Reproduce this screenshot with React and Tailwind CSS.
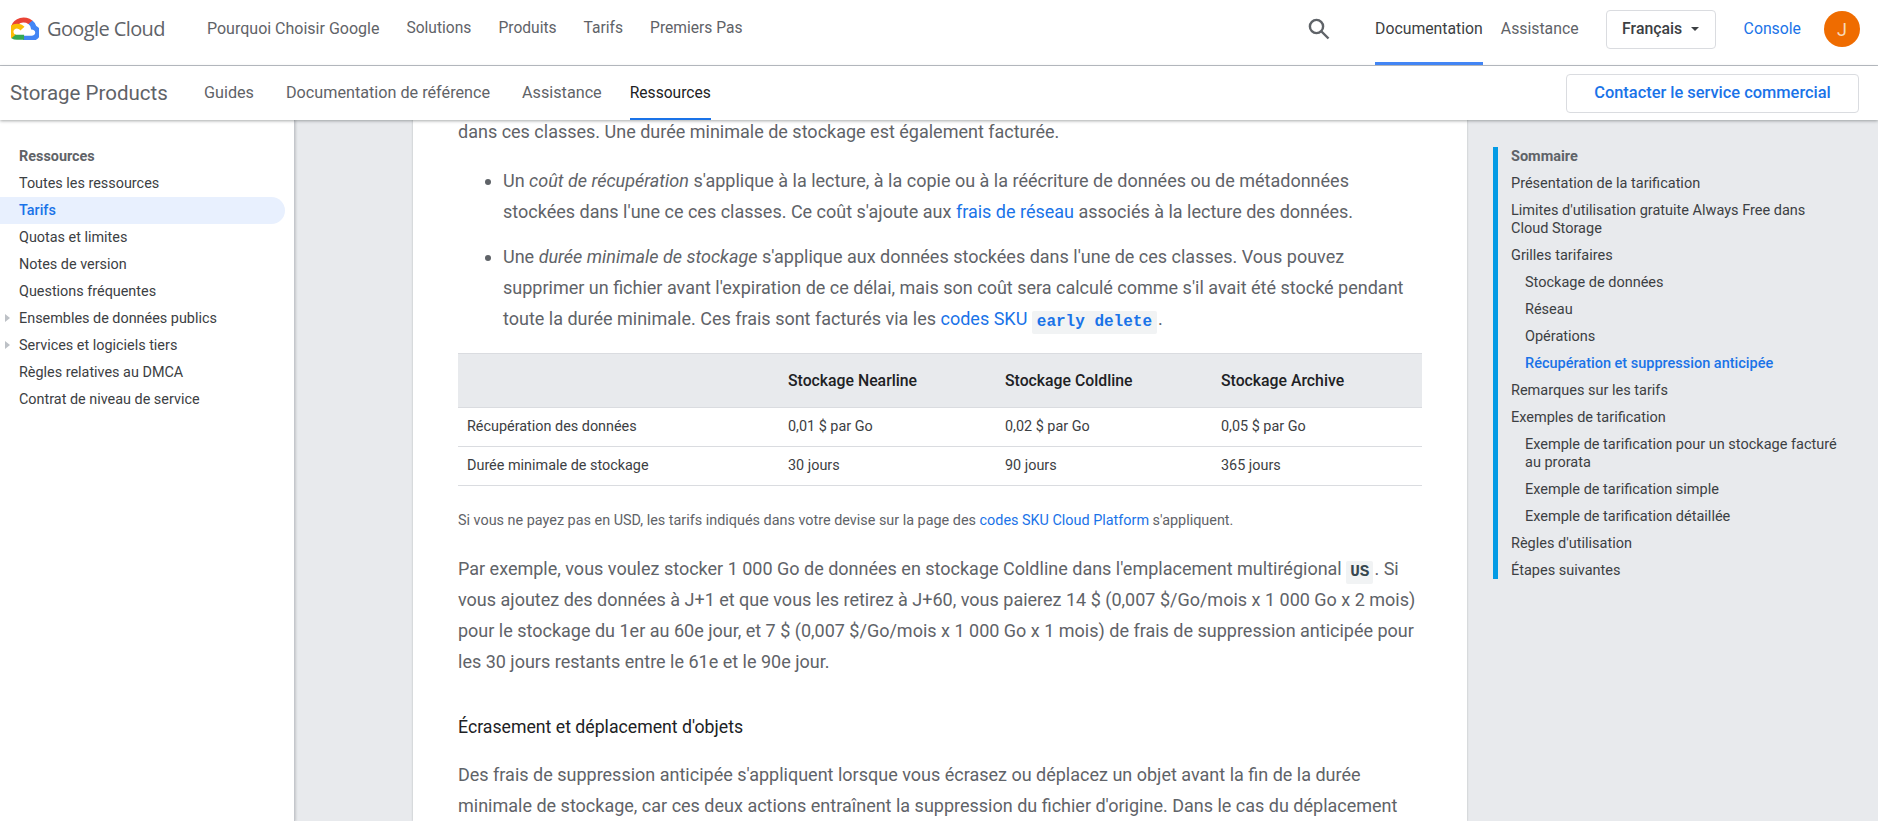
import React from "react";

const Logo = () => (
  <svg width="28" height="23" viewBox="2 0 25.5 24" preserveAspectRatio="none" className="shrink-0">
    <path d="M17.8 7.3h.9l2.6-2.6.1-1.1A11.7 11.7 0 0 0 2.2 9.3a1.4 1.4 0 0 1 .9-.1l5.2-.9s.3-.4.4-.4a6.5 6.5 0 0 1 8.9-.7h.2z" fill="#ea4335" />
    <path d="M25 9.3a11.7 11.7 0 0 0-3.5-5.7l-3.7 3.7a6.5 6.5 0 0 1 2.4 5.2v.6a3.3 3.3 0 1 1 0 6.5h-6.5l-.7.7v3.9l.7.7h6.5A8.5 8.5 0 0 0 25 9.3z" fill="#4285f4" />
    <path d="M7.4 23.8h6.5v-5.2H7.4a3.2 3.2 0 0 1-1.3-.3l-.9.3-2.6 2.6-.2.9a8.4 8.4 0 0 0 5 1.7z" fill="#34a853" />
    <path d="M7.4 7a8.5 8.5 0 0 0-5.1 15.2l3.8-3.8a3.3 3.3 0 1 1 4.4-4.4l3.8-3.8A8.5 8.5 0 0 0 7.4 7z" fill="#fbbc05" />
  </svg>
);

const side = ["Toutes les ressources", "Tarifs", "Quotas et limites", "Notes de version", "Questions fréquentes", "Ensembles de données publics", "Services et logiciels tiers", "Règles relatives au DMCA", "Contrat de niveau de service"];

const toc = [
  ["Présentation de la tarification", 0],
  ["Limites d'utilisation gratuite Always Free dans Cloud Storage", 0],
  ["Grilles tarifaires", 0],
  ["Stockage de données", 1],
  ["Réseau", 1],
  ["Opérations", 1],
  ["Récupération et suppression anticipée", 2],
  ["Remarques sur les tarifs", 0],
  ["Exemples de tarification", 0],
  ["Exemple de tarification pour un stockage facturé au prorata", 1],
  ["Exemple de tarification simple", 1],
  ["Exemple de tarification détaillée", 1],
  ["Règles d'utilisation", 0],
  ["Étapes suivantes", 0],
];

const A = ({ children }) => <a className="text-[#1a73e8]">{children}</a>;

const rows = [
  ["Récupération des données", "0,01 $ par Go", "0,02 $ par Go", "0,05 $ par Go"],
  ["Durée minimale de stockage", "30 jours", "90 jours", "365 jours"],
];

const mono = { fontFamily: "'Liberation Mono', monospace" };

export default function App() {
  return (
    <div className="h-[821px] w-[1878px] overflow-hidden flex flex-col bg-white text-[#5f6368]" style={{ fontFamily: "Roboto, sans-serif" }}>
      <div className="relative z-20 bg-white">
        <header className="h-[66px] border-b border-[#bdc1c6] flex items-center pl-[11px] pr-[18px] text-[15.8px]">
          <div className="flex items-center w-[196px] mt-[-8px]">
            <Logo />
            <span className="ml-[8px] text-[20px] tracking-[-0.6px] text-[#5f6368]" style={{ fontFamily: "'Open Sans', sans-serif" }}>Google Cloud</span>
          </div>
          <nav className="flex gap-[27px] mt-[-7px] text-[15.6px] items-center">
            <span className="text-[16px]">Pourquoi Choisir Google</span>
            <span>Solutions</span>
            <span>Produits</span>
            <span>Tarifs</span>
            <span>Premiers Pas</span>
          </nav>
          <div className="ml-auto flex items-center h-full">
            <svg width="24" height="24" viewBox="0 0 24 24" fill="none" stroke="#5f6368" strokeWidth="2.4" className="mt-[-7px]"><circle cx="9.5" cy="9.5" r="6.6" /><path d="M14.5 14.5 21.5 21.5" /></svg>
            <div className="ml-[44px] h-full flex items-center border-b-[3px] border-[#4285f4] text-[#3c4043] mt-[-1px]"><span className="mt-[-3px]">Documentation</span></div>
            <span className="ml-[18px] mt-[-7px]">Assistance</span>
            <div className="ml-[27px] w-[110px] h-[39px] mt-[-7px] border border-[#dadce0] rounded-[4px] flex items-center justify-center text-[#3c4043] font-medium text-[15.8px]">
              Français
              <span className="ml-[9px] w-0 h-0 border-x-[4.5px] border-x-transparent border-t-[4.5px] border-t-[#3c4043]" />
            </div>
            <span className="ml-[28px] mt-[-7px] text-[#1a73e8]">Console</span>
            <div className="ml-[23px] mt-[-7px] w-[36px] h-[36px] rounded-full bg-[#ef6c00] text-[#f8d9b8] flex items-center justify-center text-[18px]">J</div>
          </div>
        </header>
        <div className="h-[54px] flex items-center pl-[10px] pr-[19px] shadow-[0_1px_3px_rgba(60,64,67,0.45)] text-[16.2px]">
          <span className="text-[20.5px] w-[194px]">Storage Products</span>
          <nav className="flex gap-[32px] h-full">
            <span className="flex items-center">Guides</span>
            <span className="flex items-center">Documentation de référence</span>
            <span className="flex items-center">Assistance</span>
            <span className="flex items-center ml-[-4px] pt-[4px] text-[15.6px] text-[#202124] border-b-2 border-[#1a73e8]">Ressources</span>
          </nav>
          <div className="ml-auto w-[293px] h-[39px] border border-[#dadce0] rounded-[4px] flex items-center justify-center text-[#1a73e8] font-medium text-[16.4px]">Contacter le service commercial</div>
        </div>
      </div>

      <div className="flex flex-1 min-h-0">
        <aside className="w-[295px] shrink-0 border-r border-[#c4c7cc] bg-white pt-[23px] pr-[9px] text-[14.4px] leading-[27px] text-[#3c4043] relative z-10 shadow-[1px_0_2px_rgba(60,64,67,0.2)]">
          <div className="pl-[19px] font-bold text-[#5f6368]">Ressources</div>
          {side.map((s) => (
            <div key={s} className={"relative pl-[19px] rounded-r-full " + (s === "Tarifs" ? "bg-[#e8f0fe] text-[#1a73e8] font-medium" : "")}>
              {(s.startsWith("Ensembles") || s.startsWith("Services")) && (
                <span className="absolute left-[5px] top-[9px] w-0 h-0 border-y-[4.5px] border-y-transparent border-l-[5px] border-l-[#bdc1c6]" />
              )}
              {s}
            </div>
          ))}
        </aside>

        <main className="flex-1 min-w-0 bg-[#e8eaed] flex">
          <article className="ml-[118px] w-[1054px] shrink-0 bg-white px-[45px] -mt-[4px] text-[18px] leading-[31px] shadow-[0_0_2px_rgba(60,64,67,0.3)]">
            <p>dans ces classes. Une durée minimale de stockage est également facturée.</p>
            <ul className="list-disc pl-[45px] mt-[18px] text-[#5f6368]">
              <li>Un <em>coût de récupération</em> s'applique à la lecture, à la copie ou à la réécriture de données ou de métadonnées stockées dans l'une ce ces classes. Ce coût s'ajoute aux <A>frais de réseau</A> associés à la lecture des données.</li>
              <li className="mt-[14px]">Une <em>durée minimale de stockage</em> s'applique aux données stockées dans l'une de ces classes. Vous pouvez supprimer un fichier avant l'expiration de ce délai, mais son coût sera calculé comme s'il avait été stocké pendant toute la durée minimale. Ces frais sont facturés via les <A>codes SKU</A> <code className="inline-block h-[23px] leading-[23px] align-[-1px] px-[5px] mr-[1px] bg-[#f1f3f4] text-[#1a73e8] text-[16px] font-bold rounded-[2px]" style={mono}>early delete</code>.</li>
            </ul>
            <table className="w-full mt-[18.5px] border-collapse text-[14.4px] leading-[21px] text-[#3c4043] table-fixed">
              <thead>
                <tr className="bg-[#e8eaed] h-[54px] border-y border-[#dadce0] text-[#202124] text-[15.8px]">
                  <th className="w-[321px]" />
                  <th className="w-[217px] text-left font-medium px-[9px]">Stockage Nearline</th>
                  <th className="w-[216px] text-left font-medium px-[9px]">Stockage Coldline</th>
                  <th className="text-left font-medium px-[9px]">Stockage Archive</th>
                </tr>
              </thead>
              <tbody>
                {rows.map((r) => (
                  <tr key={r[0]} className="h-[39px] border-b border-[#dadce0]">
                    {r.map((c) => <td key={c} className="px-[9px]">{c}</td>)}
                  </tr>
                ))}
              </tbody>
            </table>
            <p className="mt-[24.5px] text-[14.4px] leading-[21px]">Si vous ne payez pas en USD, les tarifs indiqués dans votre devise sur la page des <A>codes SKU Cloud Platform</A> s'appliquent.</p>
            <p className="mt-[21.5px]">Par exemple, vous voulez stocker 1 000 Go de données en stockage Coldline dans l'emplacement multirégional <code className="inline-block h-[23px] leading-[23px] align-[-1px] px-[4px] mr-[1px] bg-[#f1f3f4] text-[#37474f] text-[16px] font-bold rounded-[2px]" style={mono}>US</code>. Si vous ajoutez des données à J+1 et que vous les retirez à J+60, vous paierez 14 $ (0,007 $/Go/mois x 1 000 Go x 2 mois) pour le stockage du 1er au 60e jour, et 7 $ (0,007 $/Go/mois x 1 000 Go x 1 mois) de frais de suppression anticipée pour les 30 jours restants entre le 61e et le 90e jour.</p>
            <h3 className="mt-[35px] text-[17.7px] leading-[31px] font-normal text-[#202124]">Écrasement et déplacement d'objets</h3>
            <p className="mt-[16px]">Des frais de suppression anticipée s'appliquent lorsque vous écrasez ou déplacez un objet avant la fin de la durée minimale de stockage, car ces deux actions entraînent la suppression du fichier d'origine. Dans le cas du déplacement</p>
          </article>
          <nav className="flex-1 min-w-0 pt-[27px] pl-[26px] pr-[37px]">
            <div className="border-l-[5px] border-[#039be5] pl-[13px] text-[14.5px] leading-[18px] text-[#3c4043] flex flex-col gap-[9px]">
              <div className="font-bold text-[#5f6368] mt-[1px]">Sommaire</div>
              {toc.map(([t, k]) => (
                <div key={t} className={(k ? "pl-[14px] " : "") + (k === 2 ? "text-[#1a73e8] font-medium" : "") + (t === "Étapes suivantes" ? "-mb-[1px]" : "")}>{t}</div>
              ))}
            </div>
          </nav>
        </main>
      </div>
    </div>
  );
}
